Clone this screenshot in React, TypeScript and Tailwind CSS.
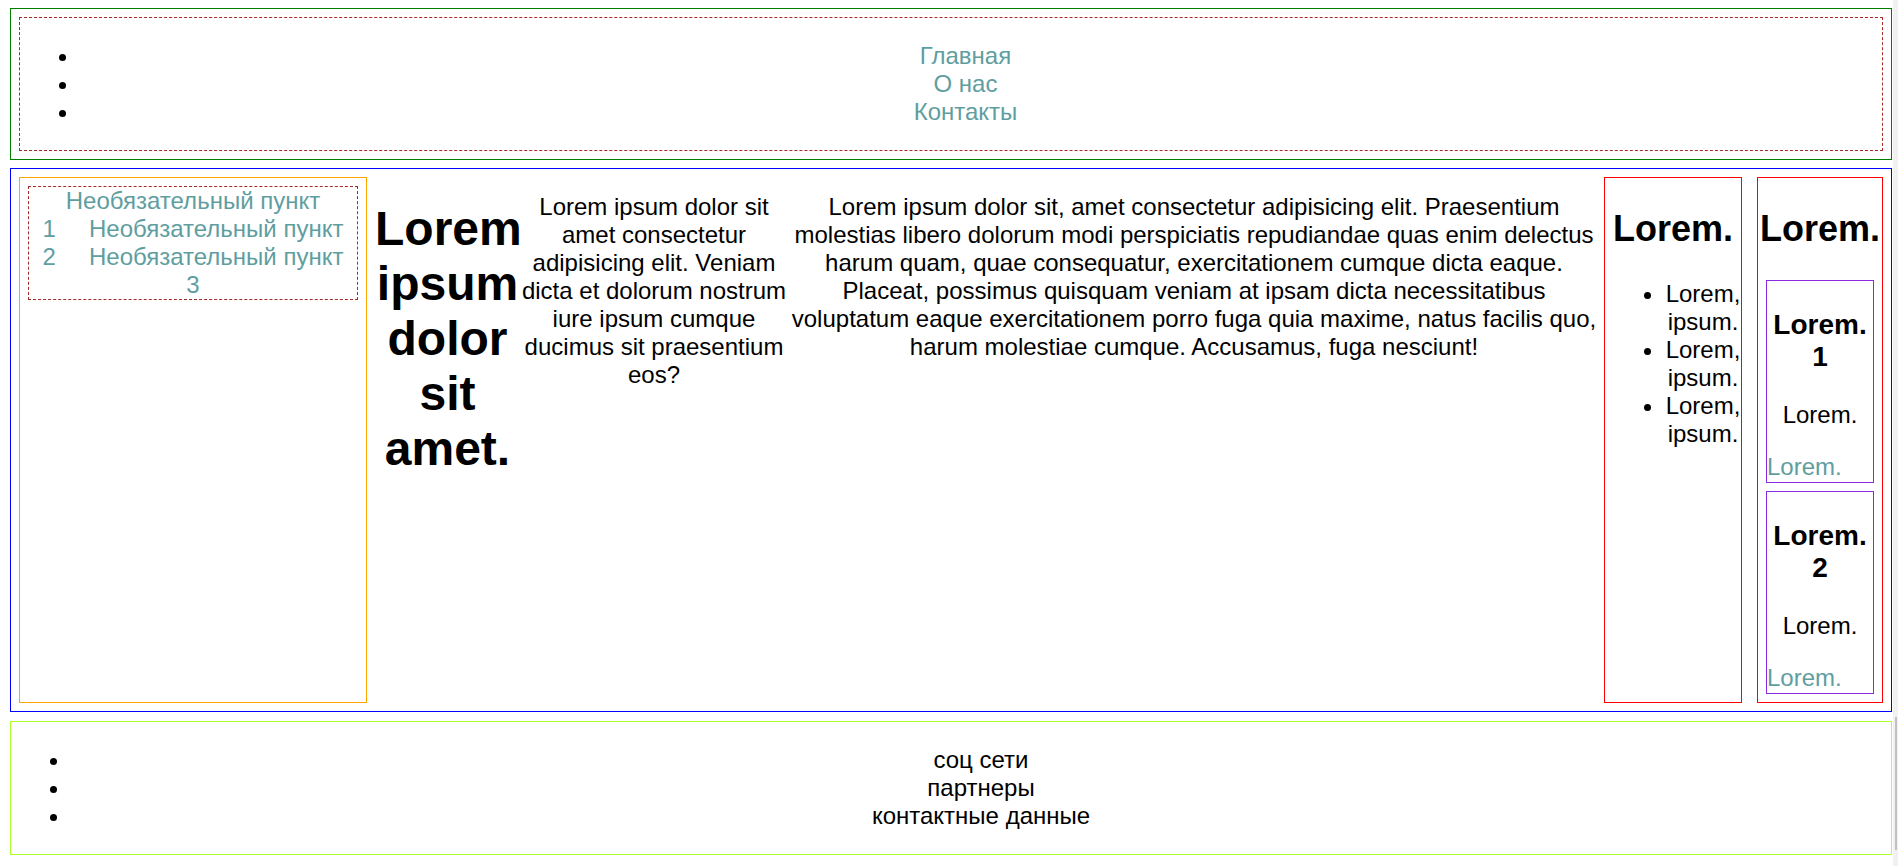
import React from 'react';

const navLinks = ['Главная', 'О нас', 'Контакты'];
const footerLinks = ['соц сети', 'партнеры', 'контактные данные'];

function Card({ n }: { n: number }) {
  return (
    <div className="m-2 border border-[#8a2be2] pb-px">
      <h3 className="my-[28px] text-center text-[28px] font-bold leading-[32px]">Lorem. {n}</h3>
      <p className="my-6 text-center">Lorem.</p>
      <a className="block text-[#5f9ea0]">Lorem.</a>
    </div>
  );
}

export default function App() {
  return (
    <div className="flex min-h-screen bg-white font-['Liberation_Sans',Arial,sans-serif] text-[24px] leading-[28px] text-black">
      <div className="w-[1893px] pl-[10px] pr-[1px] pt-[8px] pb-[10px]">
        {/* Header */}
        <header className="border border-[#008000] p-2">
          <nav className="border border-dashed border-[#a52a2a]">
            <ul className="my-6 list-disc pl-[60px] pr-[31px] text-center text-[#5f9ea0]">
              {navLinks.map((l) => (
                <li key={l} className="marker:text-black">
                  <a>{l}</a>
                </li>
              ))}
            </ul>
          </nav>
        </header>

        {/* Main */}
        <main className="mt-2 flex border border-[#0000ff] p-2">
          <aside className="w-[348px] shrink-0 border border-[#ffa500] p-2">
            <div className="border border-dashed border-[#a52a2a] text-center text-[#5f9ea0]">
              <div>Необязательный пункт</div>
              <div>
                1<span className="ml-[33px]">Необязательный пункт</span>
              </div>
              <div>
                2<span className="ml-[33px]">Необязательный пункт</span>
              </div>
              <div>3</div>
            </div>
          </aside>

          <h1 className="ml-2 mt-[24px] w-[145px] shrink-0 text-center text-[48px] font-bold leading-[55px]">
            Lorem ipsum dolor sit amet.
          </h1>

          <p className="mt-4 w-[268px] shrink-0 text-center">
            Lorem ipsum dolor sit amet consectetur adipisicing elit. Veniam dicta et dolorum nostrum iure ipsum cumque
            ducimus sit praesentium eos?
          </p>

          <p className="mt-4 w-[812px] shrink-0 text-center">
            Lorem ipsum dolor sit, amet consectetur adipisicing elit. Praesentium molestias libero dolorum modi
            perspiciatis repudiandae quas enim delectus harum quam, quae consequatur, exercitationem cumque dicta eaque.
            Placeat, possimus quisquam veniam at ipsam dicta necessitatibus voluptatum eaque exercitationem porro fuga
            quia maxime, natus facilis quo, harum molestiae cumque. Accusamus, fuga nesciunt!
          </p>

          <aside className="ml-1 w-[138px] shrink-0 border border-[#ff0000]">
            <h2 className="my-[30px] text-center text-[36px] font-bold leading-[42px]">Lorem.</h2>
            <ul className="my-6 list-disc pl-[60px] text-center">
              <li>Lorem, ipsum.</li>
              <li>Lorem, ipsum.</li>
              <li>Lorem, ipsum.</li>
            </ul>
          </aside>

          <aside className="ml-[15px] w-[126px] shrink-0 border border-[#ff0000]">
            <h2 className="my-[30px] text-center text-[36px] font-bold leading-[42px]">Lorem.</h2>
            <Card n={1} />
            <Card n={2} />
          </aside>
        </main>

        {/* Footer */}
        <footer className="mt-[9px] border border-[#adff2f]">
          <ul className="my-6 list-disc pl-[60px] text-center">
            {footerLinks.map((l) => (
              <li key={l}>{l}</li>
            ))}
          </ul>
        </footer>
      </div>

      {/* scrollbar strip */}
      <div className="w-[5px] shrink-0 bg-[#f1f1f1] pt-[717px]">
        <div className="ml-[2px] h-[133px] w-[2px] bg-[#c1c1c1]" />
      </div>
    </div>
  );
}
